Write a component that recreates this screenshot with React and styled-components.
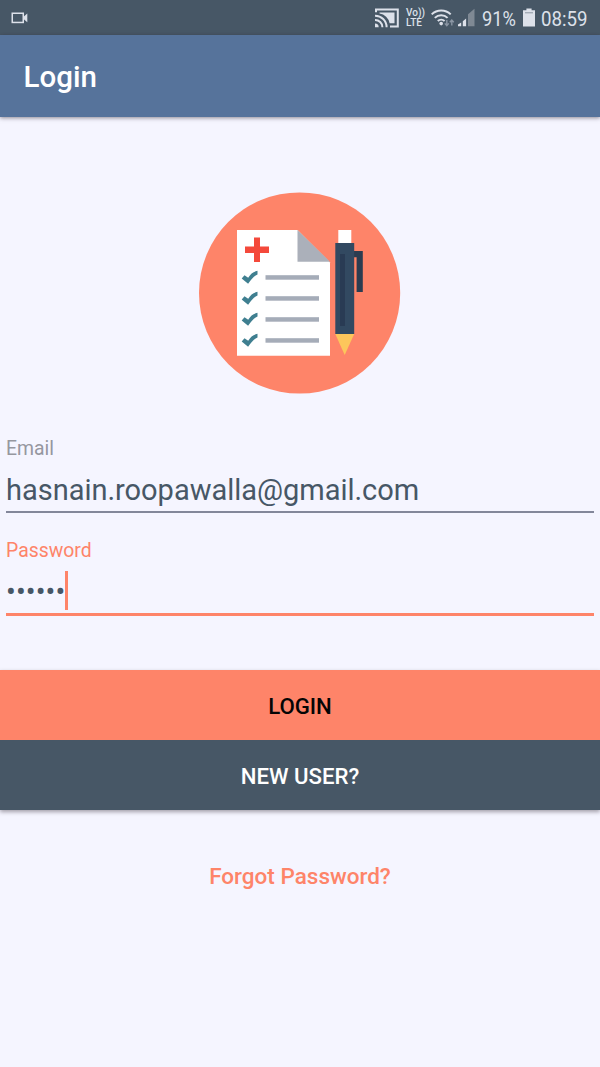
import React from "react";
import styled, { createGlobalStyle } from "styled-components";

const color = {
  page: "#f5f5ff",
  slate: "#475766",
  blue: "#56739b",
  coral: "#fe8469",
  hint: "#96979f",
  status: "#dde1ea",
};

const GlobalStyle = createGlobalStyle`
  *, *::before, *::after { box-sizing: border-box; }
  body {
    margin: 0;
    background: ${color.page};
    font-family: Roboto, "Liberation Sans", sans-serif;
  }
`;

const Screen = styled.div`
  display: flex;
  flex-direction: column;
  width: 100%;
  height: 1067px;
  overflow: hidden;
  background: ${color.page};
`;

const StatusBar = styled.div`
  display: flex;
  align-items: center;
  height: 35px;
  flex: none;
  padding: 0 12px 0 11px;
  background: ${color.slate};
  color: ${color.status};
`;

const StatusGroup = styled.div`
  display: flex;
  align-items: center;
  margin-left: auto;
`;

const Glyph = styled.svg`
  display: block;
  flex: none;
  margin-right: ${(p) => p.$gap || 0}px;
`;

const VolteBadge = styled.div`
  display: flex;
  flex-direction: column;
  width: 18px;
  margin-right: 7px;
  font-size: 10px;
  line-height: 10px;
  font-weight: 500;
`;

const StatusText = styled.div`
  width: ${(p) => p.$width}px;
  margin-right: ${(p) => p.$gap || 0}px;
  padding-top: 3px;
  font-size: 21px;
  line-height: 24px;
  white-space: nowrap;

  span {
    display: inline-block;
    transform: scaleX(${(p) => p.$squeeze});
    transform-origin: left center;
  }
`;

const AppBar = styled.header`
  display: flex;
  align-items: center;
  flex: none;
  height: 82px;
  padding: 2px 23.5px 0;
  background: ${color.blue};
  box-shadow: 0 1px 4px rgba(40, 30, 40, 0.5);
`;

const Title = styled.h1`
  margin: 0;
  color: #fff;
  font-size: 29.5px;
  line-height: 36px;
  font-weight: 500;
`;

const Logo = styled.svg`
  display: block;
  flex: none;
  align-self: center;
  margin-top: 75px;
`;

const Form = styled.form`
  display: flex;
  flex-direction: column;
  flex: none;
  margin-top: 41px;
  padding: 0 6px;
`;

const Field = styled.label`
  display: flex;
  flex-direction: column;
  height: 102px;
`;

const FieldLabel = styled.span`
  height: 26px;
  font-size: 19.4px;
  line-height: 28px;
  color: ${(p) => (p.$active ? color.coral : color.hint)};
`;

const FieldValue = styled.span`
  display: flex;
  align-items: center;
  height: ${(p) => (p.$active ? 54 : 52)}px;
  padding-top: ${(p) => (p.$active ? 5 : 7)}px;
  margin-top: ${(p) => (p.$active ? -1 : 0)}px;
  border-bottom: ${(p) =>
    p.$active ? `3px solid ${color.coral}` : "2px solid #83879a"};
  color: ${color.slate};
  font-size: 29px;
  line-height: 40px;
  letter-spacing: ${(p) => (p.$active ? 0.1 : -0.02)}px;
`;

const Dots = styled.span`
  padding-top: 4px;
`;

const Caret = styled.span`
  width: 3px;
  height: 39px;
  background: ${color.coral};
`;

const Actions = styled.div`
  display: flex;
  flex-direction: column;
  flex: none;
  margin-top: 31px;
  box-shadow: 0 2px 4px rgba(40, 30, 40, 0.4);
`;

const Button = styled.button`
  height: 70px;
  padding: 1px 0 0;
  border: 0;
  background: ${(p) => (p.$primary ? color.coral : color.slate)};
  color: ${(p) => (p.$primary ? "#050505" : "#fff")};
  font: 500 22.2px/30px Roboto, "Liberation Sans", sans-serif;
`;

const ForgotLink = styled.a`
  align-self: center;
  margin-top: 51px;
  color: ${color.coral};
  font-size: 22.5px;
  line-height: 30px;
  font-weight: 500;
`;

const CameraIcon = () => (
  <Glyph width="17" height="12" viewBox="0 0 17 12">
    <rect x="1.25" y="1.25" width="11" height="9.2" fill="none" stroke="currentColor" strokeWidth="1.5" />
    <path d="M12.5 4.8L16.3 1.6V10.2L12.5 7Z" fill="currentColor" />
  </Glyph>
);

const CastIcon = () => (
  <Glyph $gap={7} width="24" height="20" viewBox="0 0 24 20">
    <path d="M1 4.2V1.4H22.8V18.4H15" fill="none" stroke="currentColor" strokeWidth="2" />
    <path d="M4.5 4.6H19.5V15.2H14.6A11.8 11.8 0 0 0 4.5 5.6Z" fill="currentColor" />
    <path d="M0 7.8A11.4 11.4 0 0 1 11.6 19.2M0 11.9A7.3 7.3 0 0 1 7.4 19.2" fill="none" stroke="currentColor" strokeWidth="2" />
    <path d="M0 15.5A3.7 3.7 0 0 1 3.7 19.2H0Z" fill="currentColor" />
  </Glyph>
);

const WifiIcon = () => (
  <Glyph $gap={3} width="24" height="18" viewBox="0 0 24 18">
    <g fill="none" stroke="currentColor" strokeWidth="2">
      <path d="M0.7 5.4A13.6 13.6 0 0 1 19.7 5.4" />
      <path d="M3.8 8.9A9.2 9.2 0 0 1 16.6 8.9" />
      <path d="M6.8 12A5 5 0 0 1 13.6 12" />
    </g>
    <circle cx="10.2" cy="14.6" r="1.8" fill="currentColor" />
    <path d="M15.8 11V16.4M13.8 14.4L15.8 16.6L17.8 14.4M20.8 16.6V11.2M18.8 13.2L20.8 11L22.8 13.2" fill="none" stroke="#8b96a4" strokeWidth="1.4" />
  </Glyph>
);

const SignalIcon = () => (
  <Glyph $gap={7} width="17" height="19" viewBox="0 0 17 19">
    <path d="M0 18.2V16.6L3.2 14.4V18.2ZM4.8 18.2V13.2L8.1 10.4V18.2Z" fill="currentColor" />
    <path d="M10 18.2V6.2L16.5 0.8V18.2Z" fill="#7f8994" />
  </Glyph>
);

const BatteryIcon = () => (
  <Glyph $gap={6} width="12" height="19" viewBox="0 0 12 19">
    <path d="M3.4 0.6H8.6V2.2H12V18.4H0V2.2H3.4Z" fill="currentColor" />
    <path d="M2 4.8H10" stroke="#8c96a2" strokeWidth="1" />
  </Glyph>
);

const CHECK_ROWS = [0, 21, 42, 63];

const ClipboardLogo = () => (
  <Logo width="202" height="202" viewBox="0 0 202 202" role="img">
    <circle cx="100.6" cy="101" r="100.6" fill={color.coral} />
    <path d="M38 38H98.5L131 70.5V163.8H38Z" fill="#fff" />
    <path d="M98.5 38L131 69.7H98.5Z" fill="#abb0ba" />
    <path d="M55 45.5H61V54.5H70V61H61V70H55V61H46V54.5H55Z" fill="#f4493b" />
    {CHECK_ROWS.map((y) => (
      <g key={y} transform={`translate(-0.5 ${y})`}>
        <path d="M43.2 86.4L46 83.2L49.7 85.7C52.2 81.8 54.7 79.6 59 78.8V82.4C55.2 84.4 53 87.2 49.6 91.8Z" fill="#3f7f90" />
        <rect x="67" y="83.2" width="53.5" height="4.5" fill="#a5acb8" />
      </g>
    ))}
    <rect x="139.3" y="38" width="13" height="14" fill="#fff" />
    <path d="M154 59H163.8V100H157.6V65.3H154Z" fill="#2b3c50" />
    <rect x="136.3" y="51" width="18.9" height="91" fill="#324961" />
    <rect x="141" y="62" width="5" height="72" fill="#293b54" />
    <path d="M136.3 142H155.2L145.7 163Z" fill="#fdc65b" />
  </Logo>
);

export default function App() {
  return (
    <>
      <GlobalStyle />
      <Screen>
        <StatusBar>
          <CameraIcon />
          <StatusGroup>
            <CastIcon />
            <VolteBadge>
              <span>Vo))</span>
              <span>LTE</span>
            </VolteBadge>
            <WifiIcon />
            <SignalIcon />
            <StatusText $width={34} $gap={7} $squeeze={0.87}>
              <span>91%</span>
            </StatusText>
            <BatteryIcon />
            <StatusText $width={47} $squeeze={0.89}>
              <span>08:59</span>
            </StatusText>
          </StatusGroup>
        </StatusBar>
        <AppBar>
          <Title>Login</Title>
        </AppBar>
        <ClipboardLogo />
        <Form>
          <Field>
            <FieldLabel>Email</FieldLabel>
            <FieldValue>hasnain.roopawalla@gmail.com</FieldValue>
          </Field>
          <Field>
            <FieldLabel $active>Password</FieldLabel>
            <FieldValue $active>
              <Dots>••••••</Dots>
              <Caret />
            </FieldValue>
          </Field>
        </Form>
        <Actions>
          <Button type="button" $primary>LOGIN</Button>
          <Button type="button">NEW USER?</Button>
        </Actions>
        <ForgotLink>Forgot Password?</ForgotLink>
      </Screen>
    </>
  );
}
